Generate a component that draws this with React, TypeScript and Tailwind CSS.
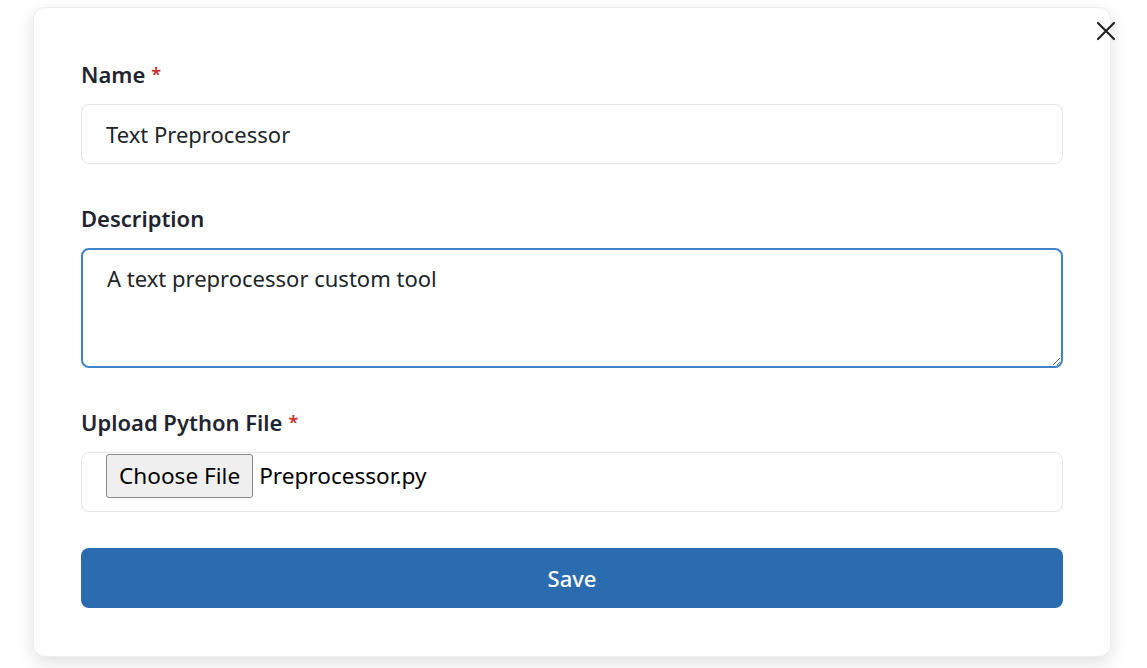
import type { ReactNode } from "react";

const Label = ({ children, required }: { children: ReactNode; required?: boolean }) => (
  <label className="block text-[22px] leading-[28px] font-semibold text-[#1f2530] mb-4">
    {children}
    {required && <span className="relative -top-[2px] ml-[6px] text-[#c53030] text-[18px] leading-none">*</span>}
  </label>
);

const App = () => {
  return (
    <div className="min-h-screen bg-white font-['Noto_Sans',sans-serif] text-[#212529] pt-[7px] pl-[33px]">
      <div className="relative w-[1078px] rounded-xl bg-white border border-[#eceef1] shadow-[0_6px_18px_rgba(0,0,0,0.12)] px-[47px] pt-[52px] pb-12">
        {/* close button sits over the corner */}
        <button className="absolute right-[-6px] top-[13px] text-[#222] p-0">
          <svg width="20" height="20" viewBox="0 0 20 20" fill="none" stroke="currentColor" strokeWidth="2.2" strokeLinecap="round">
            <path d="M2 2 L18 18 M18 2 L2 18" />
          </svg>
        </button>

        <div className="mb-10">
          <Label required>Name</Label>
          <input
            readOnly
            value="Text Preprocessor"
            className="w-full h-[60px] rounded-lg border border-[#e3e6ea] px-6 text-[22px] text-[#212529] outline-none"
          />
        </div>

        <div className="mb-10">
          <Label>Description</Label>
          <textarea
            defaultValue="A text preprocessor custom tool"
            className="block w-full h-[120px] rounded-lg border-2 border-[#3f84c8] px-6 pt-[14px] text-[22px] leading-[28px] text-[#212529] outline-none"
          />
        </div>

        <div className="mb-9">
          <Label required>Upload Python File</Label>
          <div className="flex items-start h-[60px] rounded-lg border border-[#e3e6ea] pl-6 pt-[1px]">
            <span className="h-[44px] px-[12px] flex items-center rounded-[3px] border border-[#8a8a8a] bg-[#efefef] text-[22.6px] text-black">
              Choose File
            </span>
            <span className="ml-[6px] h-[44px] flex items-center text-[22.6px] text-black">Preprocessor.py</span>
          </div>
        </div>

        <button className="w-full h-[60px] rounded-lg bg-[#2b6cb0] text-white text-[22px] font-medium">
          Save
        </button>
      </div>
    </div>
  );
};

export default App;
